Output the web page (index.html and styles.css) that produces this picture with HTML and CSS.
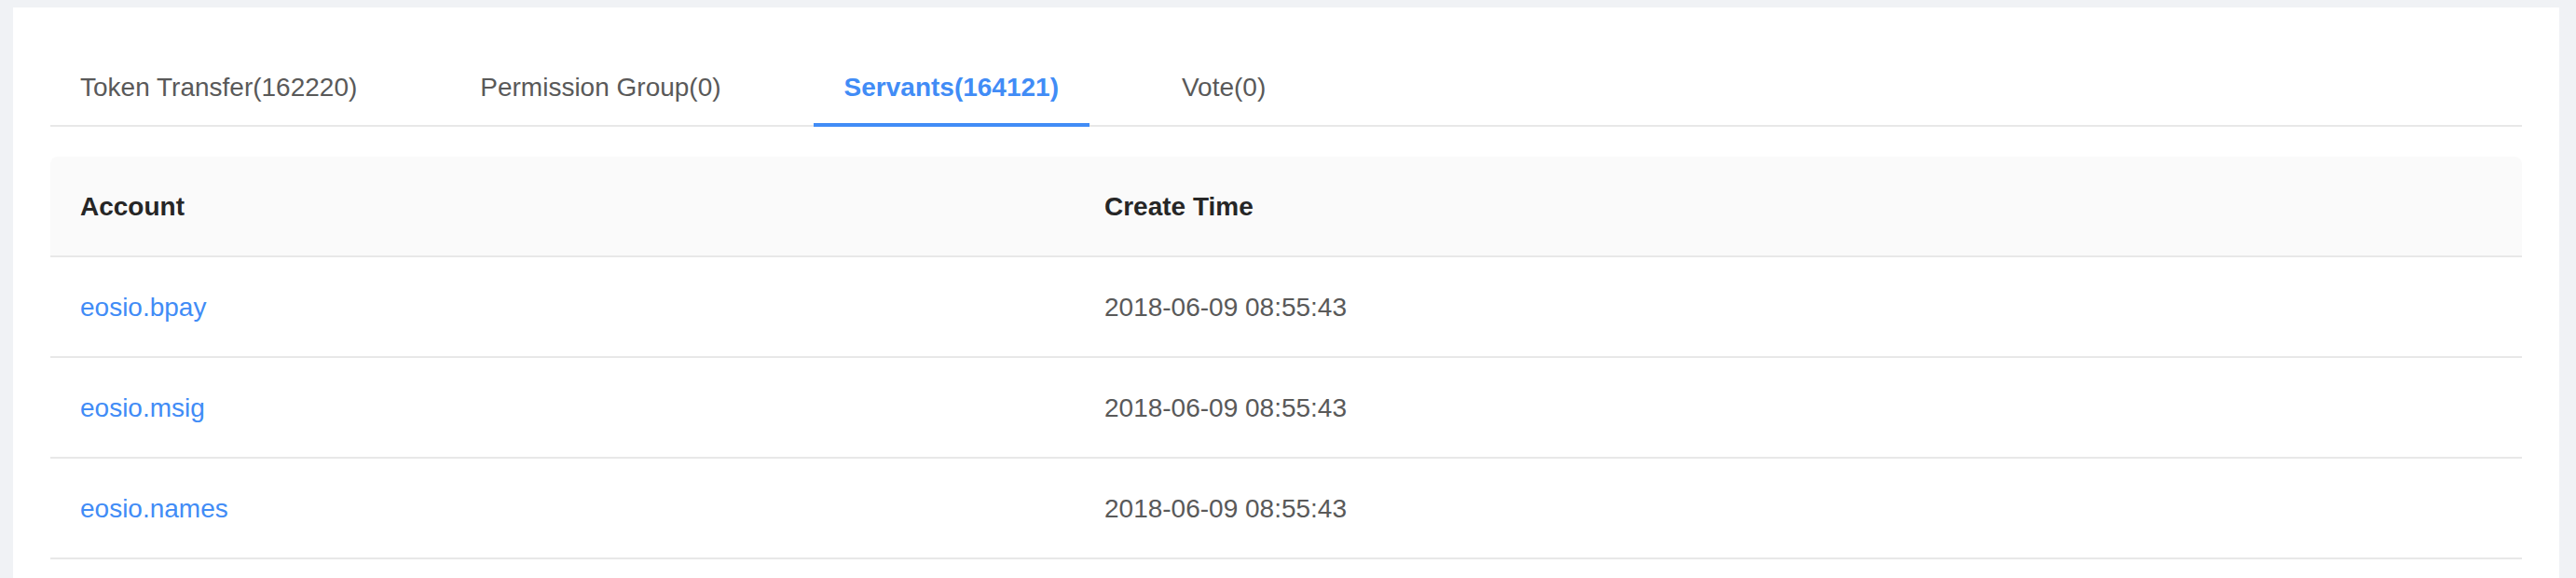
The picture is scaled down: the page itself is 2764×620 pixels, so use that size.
FILE: index.html
```html
<!DOCTYPE html>
<html lang="en">
<head>
<meta charset="utf-8">
<title>Servants</title>
<link rel="stylesheet" href="styles.css">
</head>
<body>
<div class="card">
  <div class="tabs-nav">
    <div class="tab">Token Transfer(162220)</div>
    <div class="tab">Permission Group(0)</div>
    <div class="tab tab-active">Servants(164121)</div>
    <div class="tab">Vote(0)</div>
  </div>
  <table class="table">
    <colgroup>
      <col class="col-account">
      <col>
    </colgroup>
    <thead>
      <tr>
        <th>Account</th>
        <th>Create Time</th>
      </tr>
    </thead>
    <tbody>
      <tr>
        <td><a class="link" href="#">eosio.bpay</a></td>
        <td>2018-06-09 08:55:43</td>
      </tr>
      <tr>
        <td><a class="link" href="#">eosio.msig</a></td>
        <td>2018-06-09 08:55:43</td>
      </tr>
      <tr>
        <td><a class="link" href="#">eosio.names</a></td>
        <td>2018-06-09 08:55:43</td>
      </tr>
    </tbody>
  </table>
</div>
</body>
</html>
```

FILE: styles.css
```css
html, body {
  margin: 0;
  padding: 0;
  background: #f0f2f5;
}

body {
  font-family: "Liberation Sans", Arial, sans-serif;
  font-size: 28px;
  color: #595959;
  padding: 8px 18px 0 14px;
}

.card {
  background: #ffffff;
  padding: 41px 40px 60px 40px;
}

.tabs-nav {
  display: flex;
  border-bottom: 2px solid #e8e8e8;
}

.tab {
  padding: 24px 33px 17px 33px;
  margin-right: 66px;
  margin-bottom: -2px;
  line-height: 42px;
  border-bottom: 4px solid transparent;
  color: #595959;
  white-space: nowrap;
}

.tab:first-child {
  padding-left: 32px;
}

.tab-active {
  color: #418cf6;
  font-weight: 700;
  border-bottom-color: #418cf6;
}

.table {
  width: 100%;
  margin-top: 32px;
  border-collapse: separate;
  border-spacing: 0;
  table-layout: fixed;
}

.col-account {
  width: 1099px;
}

.table th,
.table td {
  text-align: left;
  padding: 32px 32px;
  line-height: 42px;
  border-bottom: 2px solid #e8e8e8;
}

.table th {
  background: #fafafa;
  color: #262626;
  font-weight: 700;
  padding-top: 33px;
  padding-bottom: 31px;
}

.table th:first-child {
  border-top-left-radius: 8px;
}

.table th:last-child {
  border-top-right-radius: 8px;
}

.table td {
  color: #595959;
  padding-top: 33px;
  padding-bottom: 31px;
}

.link {
  color: #418cf6;
  text-decoration: none;
}
```
